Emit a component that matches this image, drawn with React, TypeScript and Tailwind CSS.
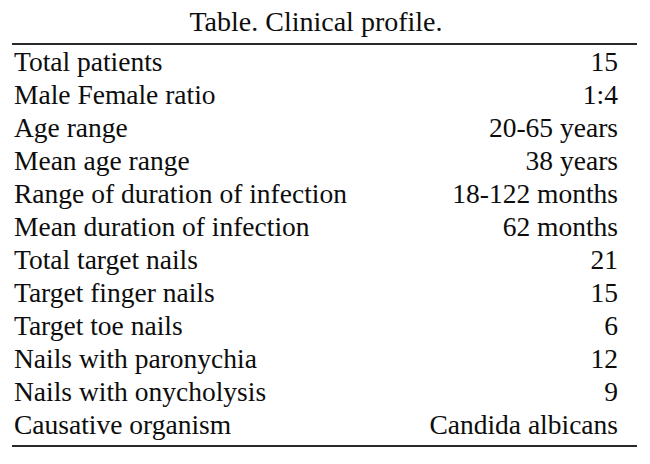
import React from "react";

const rows: [string, string][] = [
  ["Total patients", "15"],
  ["Male Female ratio", "1:4"],
  ["Age range", "20-65 years"],
  ["Mean age range", "38 years"],
  ["Range of duration of infection", "18-122 months"],
  ["Mean duration of infection", "62 months"],
  ["Total target nails", "21"],
  ["Target finger nails", "15"],
  ["Target toe nails", "6"],
  ["Nails with paronychia", "12"],
  ["Nails with onycholysis", "9"],
  ["Causative organism", "Candida albicans"],
];

export default function App() {
  return (
    <div
      className="w-[650px] h-[464px] bg-white text-[#0d0d0d] overflow-hidden"
      style={{ fontFamily: '"Liberation Serif", "Times New Roman", serif' }}
    >
      <div className="pl-[12px] w-[637px]">
        <div className="pt-[4px] h-[43px] text-center text-[28px] leading-[36px] pr-[17px]">
          Table. Clinical profile.
        </div>
        <div className="h-[2px] bg-[#2a2a2a]" />
        <div className="flex flex-col pl-[2px] pr-[19px]">
          {rows.map(([k, v]) => (
            <div key={k} className="flex justify-between h-[33px] text-[27.5px] leading-[33px]">
              <span>{k}</span>
              <span>{v}</span>
            </div>
          ))}
        </div>
        <div className="mt-[4px] h-[2px] bg-[#2a2a2a]" />
      </div>
    </div>
  );
}
